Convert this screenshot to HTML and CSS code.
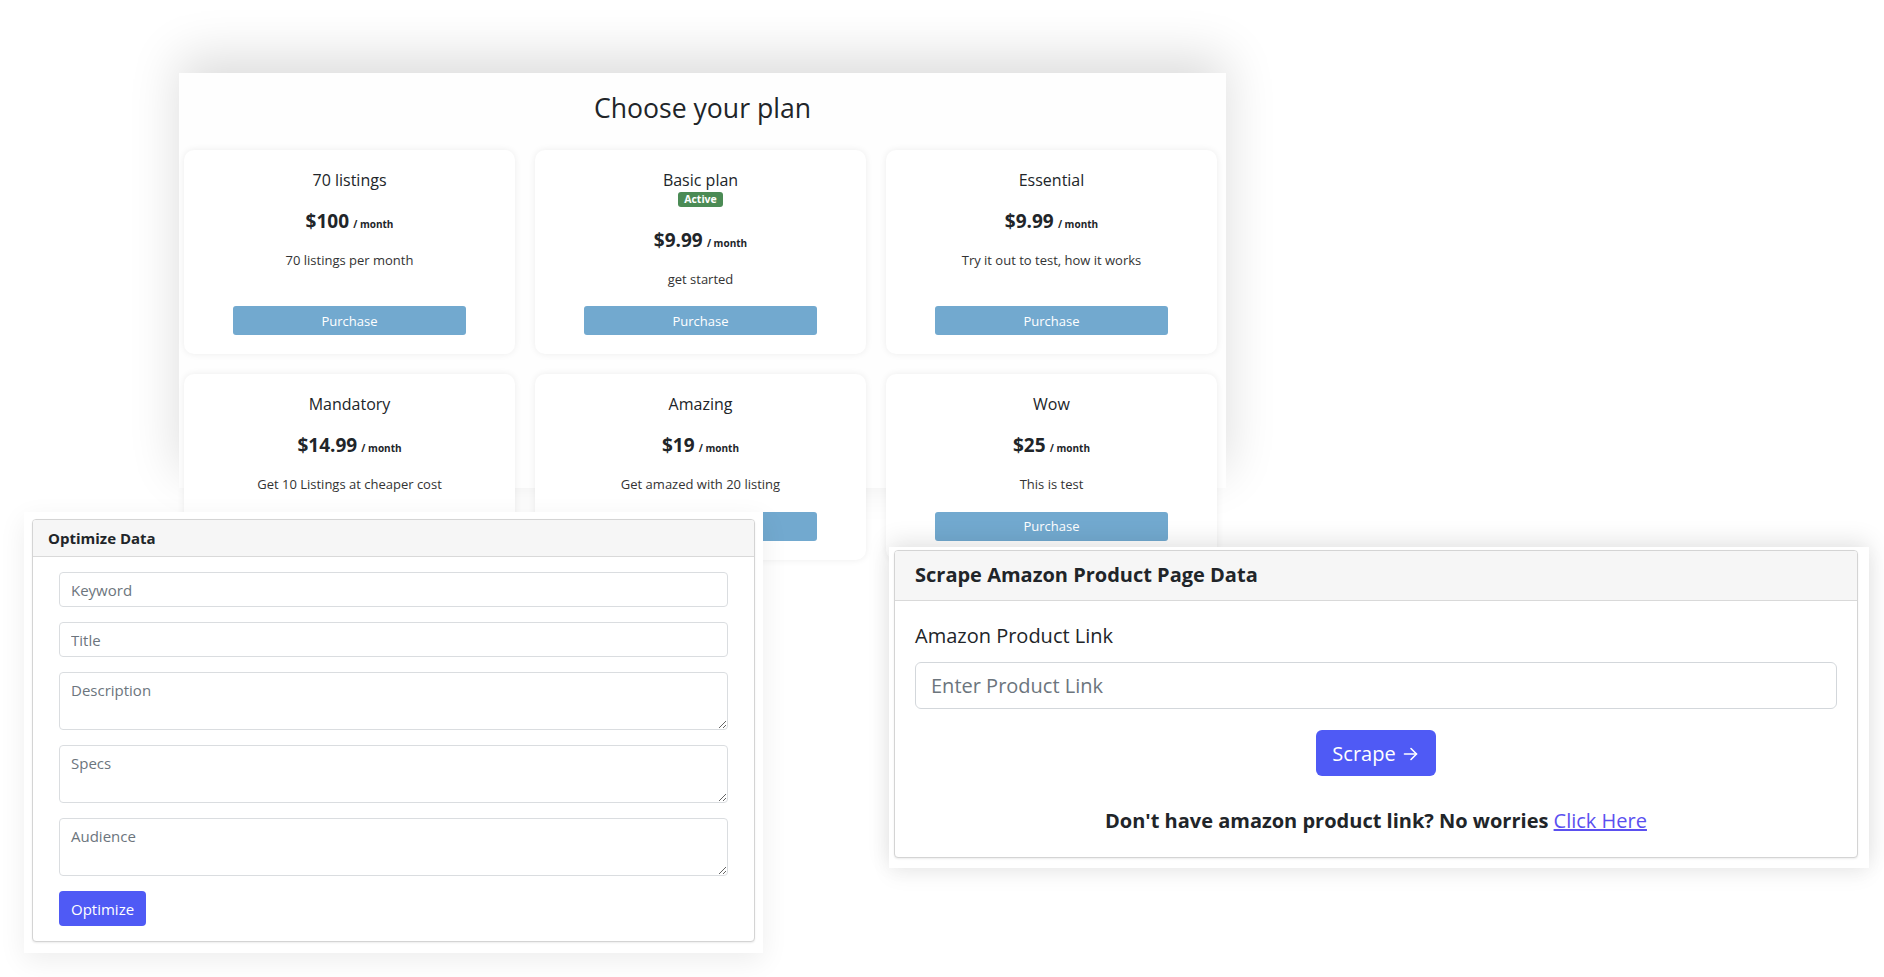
FILE: index.html
```html
<!DOCTYPE html>
<html lang="en">
<head>
<meta charset="utf-8">
<title>Plans and tools</title>
<link rel="stylesheet" href="styles.css">
</head>
<body>
<div class="canvas">

  <section class="pricing">
    <h2 class="pricing-title">Choose your plan</h2>
    <div class="plans">
      <div class="plan">
        <div class="plan-name">70 listings</div>
        <div class="plan-price"><span class="amount">$100</span> <span class="per">/ month</span></div>
        <p class="plan-desc">70 listings per month</p>
        <button class="btn-purchase">Purchase</button>
      </div>
      <div class="plan">
        <div class="plan-name">Basic plan</div>
        <div class="badge-row"><span class="badge">Active</span></div>
        <div class="plan-price"><span class="amount">$9.99</span> <span class="per">/ month</span></div>
        <p class="plan-desc">get started</p>
        <button class="btn-purchase">Purchase</button>
      </div>
      <div class="plan">
        <div class="plan-name">Essential</div>
        <div class="plan-price"><span class="amount">$9.99</span> <span class="per">/ month</span></div>
        <p class="plan-desc">Try it out to test, how it works</p>
        <button class="btn-purchase">Purchase</button>
      </div>
      <div class="plan">
        <div class="plan-name">Mandatory</div>
        <div class="plan-price"><span class="amount">$14.99</span> <span class="per">/ month</span></div>
        <p class="plan-desc">Get 10 Listings at cheaper cost</p>
        <button class="btn-purchase">Purchase</button>
      </div>
      <div class="plan">
        <div class="plan-name">Amazing</div>
        <div class="plan-price"><span class="amount">$19</span> <span class="per">/ month</span></div>
        <p class="plan-desc">Get amazed with 20 listing</p>
        <button class="btn-purchase">Purchase</button>
      </div>
      <div class="plan">
        <div class="plan-name">Wow</div>
        <div class="plan-price"><span class="amount">$25</span> <span class="per">/ month</span></div>
        <p class="plan-desc">This is test</p>
        <button class="btn-purchase">Purchase</button>
      </div>
    </div>
  </section>

  <section class="optimize-frame">
    <div class="panel">
      <div class="panel-header optimize-header">Optimize Data</div>
      <form class="optimize-body">
        <input class="field" type="text" placeholder="Keyword">
        <input class="field" type="text" placeholder="Title">
        <textarea class="field area" placeholder="Description"></textarea>
        <textarea class="field area" placeholder="Specs"></textarea>
        <textarea class="field area" placeholder="Audience"></textarea>
        <div><button type="button" class="btn-optimize">Optimize</button></div>
      </form>
    </div>
  </section>

  <section class="scrape-frame">
    <div class="panel">
      <div class="panel-header scrape-header">Scrape Amazon Product Page Data</div>
      <div class="scrape-body">
        <label class="scrape-label">Amazon Product Link</label>
        <input class="scrape-input" type="text" placeholder="Enter Product Link">
        <div class="scrape-actions">
          <button type="button" class="btn-scrape">Scrape
            <svg class="arrow" width="15" height="14" viewBox="0 0 15 14" fill="none" stroke="currentColor" stroke-width="1.6" stroke-linecap="round" stroke-linejoin="round"><path d="M1.5 7h12"/><path d="M8 1.5L13.5 7 8 12.5"/></svg>
          </button>
        </div>
        <p class="scrape-note">Don't have amazon product link? No worries <a href="#" class="link">Click Here</a></p>
      </div>
    </div>
  </section>

</div>
</body>
</html>
```

FILE: styles.css
```css
* { box-sizing: border-box; }

html, body {
  margin: 0;
  padding: 0;
  background: #ffffff;
}

body {
  font-family: "Open Sans", "Noto Sans", "Liberation Sans", sans-serif;
  color: #212529;
}

.canvas {
  position: relative;
  width: 1884px;
  height: 977px;
  overflow: hidden;
  background: #ffffff;
}

/* ---------- Pricing window ---------- */
.pricing {
  position: absolute;
  left: 179px;
  top: 73px;
  width: 1047px;
  height: 415px;
  background: #fefefe;
  box-shadow: 0 -16px 48px rgba(0, 0, 0, 0.14);
  padding-top: 20px;
}

.pricing-title {
  margin: 0 0 25px;
  text-align: center;
  font-size: 26.6px;
  line-height: 1.2;
  font-weight: 400;
  color: #212529;
}

.plans {
  display: grid;
  grid-template-columns: repeat(3, 331px);
  column-gap: 20px;
  row-gap: 20px;
  margin-left: 5px;
}

.plan {
  display: flex;
  flex-direction: column;
  align-items: stretch;
  text-align: center;
  background: #ffffff;
  border-radius: 10px;
  box-shadow: 0 0 7px rgba(0, 0, 0, 0.075);
  padding: 18px 49px 19px;
}

.plan-name {
  font-size: 16px;
  line-height: 24px;
  color: #212529;
}

.badge-row {
  height: 19px;
  line-height: 0;
}

.badge {
  display: inline-block;
  height: 15px;
  line-height: 15px;
  padding: 0 6px;
  font-size: 10.5px;
  font-weight: 700;
  color: #ffffff;
  background: #4b8b55;
  border-radius: 3px;
}

.plan-price {
  margin-top: 17px;
  line-height: 24px;
  color: #212529;
}

.amount {
  font-size: 19px;
  font-weight: 700;
}

.per {
  font-size: 10px;
  font-weight: 700;
}

.plan-desc {
  margin: 15px 0 17px;
  font-size: 13px;
  line-height: 19.5px;
  color: #333333;
}

.btn-purchase {
  margin-top: auto;
  height: 29px;
  border: none;
  border-radius: 3px;
  background: #72a9cf;
  color: #ffffff;
  font-family: inherit;
  font-size: 13px;
  padding: 0;
}

/* ---------- Shared panel ---------- */
.panel {
  background: #ffffff;
  border: 1px solid #d4d4d4;
  border-radius: 4px;
  box-shadow: 0 1px 2px rgba(0, 0, 0, 0.08);
  overflow: hidden;
}

.panel-header {
  background: #f6f6f6;
  border-bottom: 1px solid #d9d9d9;
  font-weight: 700;
  color: #212529;
}

/* ---------- Optimize window ---------- */
.optimize-frame {
  position: absolute;
  left: 24px;
  top: 512px;
  width: 739px;
  height: 441px;
  background: #ffffff;
  padding: 7px 8px 11px;
  box-shadow: 0 8px 26px rgba(0, 0, 0, 0.07);
}

.optimize-header {
  padding: 7px 15px;
  font-size: 15px;
  line-height: 22px;
}

.optimize-body {
  display: flex;
  flex-direction: column;
  gap: 15px;
  padding: 15px 26px 15px;
  margin: 0;
}

.field {
  display: block;
  width: 100%;
  height: 35px;
  padding: 6px 11px;
  border: 1px solid #dadde0;
  border-radius: 4px;
  font-family: inherit;
  font-size: 15px;
  line-height: 22px;
  color: #212529;
  background: #ffffff;
  margin: 0;
}

.field::placeholder {
  color: #6c757d;
}

.area {
  height: 58px;
  resize: vertical;
}

.btn-optimize {
  height: 35px;
  padding: 0 12px;
  border: none;
  border-radius: 4px;
  background: #4f5af5;
  color: #ffffff;
  font-family: inherit;
  font-size: 15px;
}

/* ---------- Scrape window ---------- */
.scrape-frame {
  position: absolute;
  left: 889px;
  top: 547px;
  width: 980px;
  height: 321px;
  background: #ffffff;
  padding: 3px 11px 11px 5px;
  box-shadow: 0 -6px 22px rgba(0, 0, 0, 0.1), 0 8px 20px rgba(0, 0, 0, 0.05);
}

.scrape-header {
  padding: 9px 20px 11px;
  font-size: 20px;
  line-height: 29px;
}

.scrape-body {
  padding: 20px 20px 21px;
}

.scrape-label {
  display: block;
  font-size: 20px;
  line-height: 30px;
  color: #212529;
  margin-bottom: 11px;
}

.scrape-input {
  display: block;
  width: 100%;
  height: 47px;
  padding: 8px 15px;
  border: 1px solid #d3d7db;
  border-radius: 6px;
  font-family: inherit;
  font-size: 20px;
  color: #212529;
  margin: 0;
}

.scrape-input::placeholder {
  color: #6c757d;
}

.scrape-actions {
  display: flex;
  justify-content: center;
  margin-top: 21px;
}

.btn-scrape {
  display: inline-flex;
  align-items: center;
  gap: 7px;
  height: 46px;
  padding: 0 18px 0 16px;
  border: none;
  border-radius: 6px;
  background: #4f5af5;
  color: #ffffff;
  font-family: inherit;
  font-size: 20px;
}

.arrow {
  display: block;
  margin-top: 2px;
}

.scrape-note {
  margin: 30px 0 0;
  text-align: center;
  font-size: 20px;
  line-height: 30px;
  font-weight: 700;
  color: #212529;
}

.link {
  font-weight: 400;
  color: #5b50f0;
  text-decoration: underline;
}
```
